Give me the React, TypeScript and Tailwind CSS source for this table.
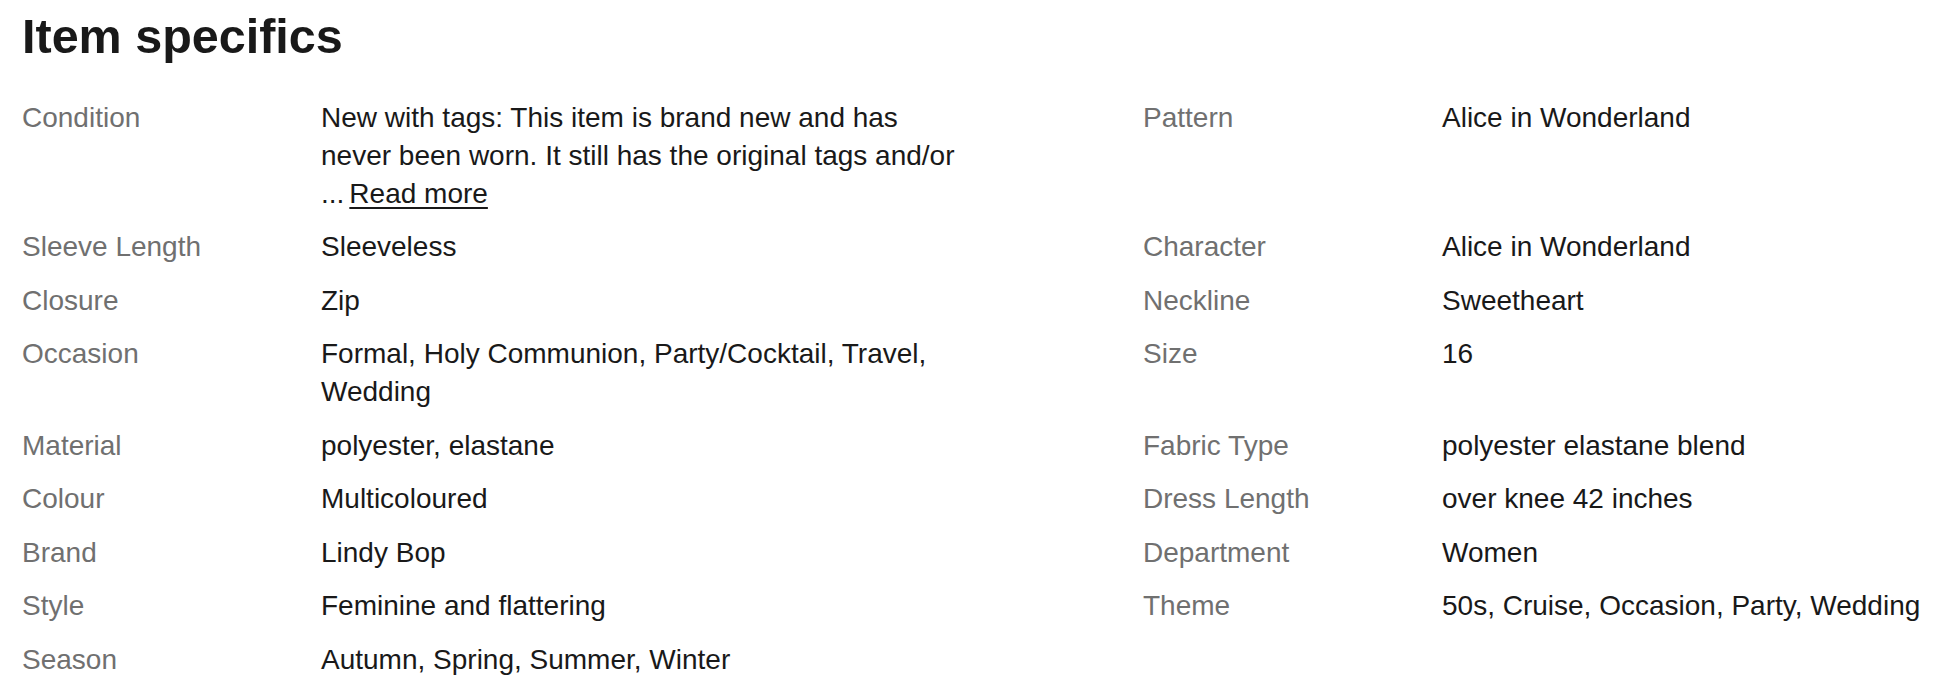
import React from "react";

type Spec = { label: string; value: React.ReactNode };

const rows: [Spec, Spec | null][] = [
  [
    {
      label: "Condition",
      value: (
        <>
          New with tags: This item is brand new and has
          <br />
          never been worn. It still has the original tags and/or
          <br />
          ...<span className="ml-[5px] underline underline-offset-[4px] decoration-[1.5px]">Read more</span>
        </>
      ),
    },
    { label: "Pattern", value: "Alice in Wonderland" },
  ],
  [
    { label: "Sleeve Length", value: "Sleeveless" },
    { label: "Character", value: "Alice in Wonderland" },
  ],
  [
    { label: "Closure", value: "Zip" },
    { label: "Neckline", value: "Sweetheart" },
  ],
  [
    { label: "Occasion", value: "Formal, Holy Communion, Party/Cocktail, Travel, Wedding" },
    { label: "Size", value: "16" },
  ],
  [
    { label: "Material", value: "polyester, elastane" },
    { label: "Fabric Type", value: "polyester elastane blend" },
  ],
  [
    { label: "Colour", value: "Multicoloured" },
    { label: "Dress Length", value: "over knee 42 inches" },
  ],
  [
    { label: "Brand", value: "Lindy Bop" },
    { label: "Department", value: "Women" },
  ],
  [
    { label: "Style", value: "Feminine and flattering" },
    { label: "Theme", value: "50s, Cruise, Occasion, Party, Wedding" },
  ],
  [{ label: "Season", value: "Autumn, Spring, Summer, Winter" }, null],
];

function Pair({ spec, wide }: { spec: Spec | null; wide?: boolean }) {
  if (!spec) return null;
  return (
    <div className="flex">
      <div className="w-[299px] shrink-0 text-[#707070]">{spec.label}</div>
      <div className={wide ? "w-[650px] text-[#191919]" : "flex-1 text-[#191919]"}>{spec.value}</div>
    </div>
  );
}

export default function App() {
  return (
    <main className="w-full h-[694px] overflow-hidden bg-white pl-[22px] font-['Liberation_Sans',Arial,sans-serif]">
      {/* Header */}
      <h1 className="mt-[12px] text-[48.5px] leading-none font-bold text-[#191919]">
        Item specifics
      </h1>

      {/* Specs */}
      <section className="mt-[38px] flex flex-col gap-[15.5px] text-[28px] leading-[38px]">
        {rows.map(([left, right], i) => (
          <div key={i} className="flex">
            <div className="w-[1121px] shrink-0">
              <Pair spec={left} wide />
            </div>
            <div className="flex-1">
              <Pair spec={right} />
            </div>
          </div>
        ))}
      </section>
    </main>
  );
}
